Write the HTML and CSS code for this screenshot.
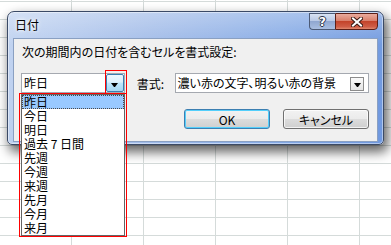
FILE: index.html
```html
<!DOCTYPE html>
<html lang="ja">
<head>
  <meta charset="UTF-8">
  <title>日付</title>
  <link rel="stylesheet" href="styles.css">
</head>
<body>
  <div class="sheet">
    <div class="dialog">
      <div class="titlebar">
        <span class="title">日付</span>
        <div class="caption-buttons">
          <span class="cap-btn help">?</span>
          <span class="cap-btn close">
            <svg width="12" height="10" viewBox="0 0 12 10">
              <path d="M2 1.5 L10 8.5 M10 1.5 L2 8.5" stroke="#3a1a14" stroke-width="4" stroke-linecap="square"/>
              <path d="M2 1.5 L10 8.5 M10 1.5 L2 8.5" stroke="#fff" stroke-width="2" stroke-linecap="square"/>
            </svg>
          </span>
        </div>
      </div>
      <div class="client">
        <div class="prompt">次の期間内の日付を含むセルを書式設定:</div>
        <div class="combo-row">
          <div class="combo combo-period">
            <span class="combo-text">昨日</span>
            <span class="drop-btn hot"><i class="arrow"></i></span>
          </div>
          <span class="format-label">書式:</span>
          <div class="combo combo-format">
            <span class="combo-text">濃い赤の文字、明るい赤の背景</span>
            <span class="drop-btn small"><i class="arrow"></i></span>
          </div>
        </div>
        <div class="button-row">
          <button class="btn btn-default">OK</button>
          <button class="btn">キャンセル</button>
        </div>
      </div>
    </div>

    <ul class="droplist">
      <li class="selected">昨日</li>
      <li>今日</li>
      <li>明日</li>
      <li>過去 7 日間</li>
      <li>先週</li>
      <li>今週</li>
      <li>来週</li>
      <li>先月</li>
      <li>今月</li>
      <li>来月</li>
    </ul>

    <div class="mark mark-button"></div>
    <div class="mark mark-list"></div>
  </div>
</body>
</html>
```

FILE: styles.css
```css
body {
  margin: 0;
  font-family: "Noto Sans CJK JP", "Noto Sans", sans-serif;
  font-size: 12px;
  color: #000;
  font-feature-settings: "palt";
}
.sheet {
  position: relative;
  width: 391px;
  height: 245px;
  overflow: hidden;
  background-color: #fff;
  background-image:
    linear-gradient(to right, #d5dbda 1px, transparent 1px),
    linear-gradient(to bottom, #d5dbda 1px, transparent 1px);
  background-size: 72px 18px;
  background-position: 71px 1px;
}

/* dialog window */
.dialog {
  position: absolute;
  left: 7px;
  top: 11px;
  width: 377px;
  height: 134px;
  box-sizing: border-box;
  border: 1px solid #3b4a66;
  border-radius: 7px 7px 5px 5px;
  background:
    linear-gradient(to bottom, rgba(255,255,255,0.3), rgba(255,255,255,0) 25%),
    linear-gradient(100deg, #c2d4f1 0%, #a5bee9 35%, #88ace6 70%, #6f98df 100%);
  box-shadow: inset 0 0 0 1px rgba(255,255,255,0.45), 3px 6px 12px 1px rgba(0,0,0,0.62);
  display: flex;
  flex-direction: column;
}
.titlebar {
  height: 26px;
  display: flex;
  justify-content: space-between;
  align-items: flex-start;
  padding: 0 5px 0 7px;
}
.title {
  margin-top: 5px;
  line-height: 16px;
  text-shadow: 0 0 5px #fff, 0 0 3px #fff;
}
.caption-buttons {
  display: flex;
  margin-top: 1px;
}
.cap-btn {
  height: 17px;
  box-sizing: border-box;
  display: flex;
  align-items: center;
  justify-content: center;
}
.help {
  width: 26px;
  border: 1px solid #4c5a75;
  border-right: none;
  border-radius: 0 0 0 4px;
  background: linear-gradient(#d8e2f3 0%, #b9c9e6 45%, #90a7d0 50%, #a9bee1 100%);
  color: #fff;
  font-family: "DejaVu Sans", sans-serif;
  font-weight: bold;
  font-size: 12px;
  text-shadow: 1px 0 #2b3346, -1px 0 #2b3346, 0 1px #2b3346, 0 -1px #2b3346;
}
.close {
  width: 43px;
  border: 1px solid #5b1f17;
  border-radius: 0 0 4px 0;
  background: linear-gradient(#eaab9d 0%, #d97f6b 45%, #c3442b 50%, #cf5d46 85%, #e08a70 100%);
}

/* client area */
.client {
  flex: 1;
  margin: 0 5px 2px;
  background: #f0f0f0;
  border: 1px solid #8aa0c2;
  padding: 5px 8px 0 7px;
}
.prompt {
  line-height: 16px;
  padding-left: 1px;
}
.combo-row {
  display: flex;
  align-items: center;
  margin-top: 13px;
}
.combo {
  height: 20px;
  box-sizing: border-box;
  border: 1px solid #a5a9b0;
  background: #fff;
  display: flex;
  justify-content: space-between;
  align-items: center;
}
.combo-period {
  width: 104px;
  align-items: stretch;
}
.combo-format {
  width: 195px;
  align-items: flex-start;
}
.combo-text {
  padding-left: 2px;
  line-height: 18px;
  white-space: nowrap;
}
.format-label {
  width: 38px;
  margin-left: 12px;
}
.drop-btn {
  display: flex;
  align-items: center;
  justify-content: center;
  box-sizing: border-box;
}
.drop-btn.hot {
  width: 18px;
  border: 1px solid #3c7fb1;
  border-radius: 2px;
  background: linear-gradient(#eef8fe 0%, #dcf1fd 45%, #bfe6fc 50%, #a6d8f4 100%);
  padding-top: 3px;
}
.drop-btn.small {
  width: 14px;
  height: 14px;
  margin: 3px 4px 0 0;
  border: 1px solid #8c8c8c;
  background: linear-gradient(#fafafa, #e4e4e4);
  padding-top: 1px;
}
.arrow {
  width: 1px;
  height: 0;
  border-top: 4px solid #000;
  border-left: 3px solid transparent;
  border-right: 3px solid transparent;
}
.button-row {
  display: flex;
  justify-content: flex-end;
  gap: 13px;
  margin-top: 16px;
}
.btn {
  width: 86px;
  height: 20px;
  padding: 0;
  font: inherit;
  color: #000;
  border: 1px solid #707070;
  border-radius: 3px;
  background: linear-gradient(#f2f2f2 0%, #ebebeb 49%, #dddddd 50%, #cfcfcf 100%);
  box-shadow: inset 0 0 0 1px rgba(255,255,255,0.75);
}
.btn-default {
  border-color: #3c7fb1;
  box-shadow: inset 0 0 0 1px #54cffb;
}

/* open drop-down list */
.droplist {
  position: absolute;
  left: 21px;
  top: 94px;
  width: 104px;
  height: 142px;
  box-sizing: border-box;
  margin: 0;
  padding: 0;
  list-style: none;
  background: #fff;
  border: 1px solid #646464;
}
.droplist li {
  height: 14px;
  line-height: 14px;
  padding-left: 2px;
  white-space: nowrap;
}
.droplist .selected {
  background: #99c9ff;
  outline: 1px dotted #4a4a4a;
  outline-offset: -1px;
}

/* red annotation boxes */
.mark {
  position: absolute;
  box-sizing: border-box;
  border: 1px solid #ff0000;
}
.mark-button {
  left: 105px;
  top: 70px;
  width: 22px;
  height: 24px;
}
.mark-list {
  left: 19px;
  top: 93px;
  width: 108px;
  height: 144px;
}
```
